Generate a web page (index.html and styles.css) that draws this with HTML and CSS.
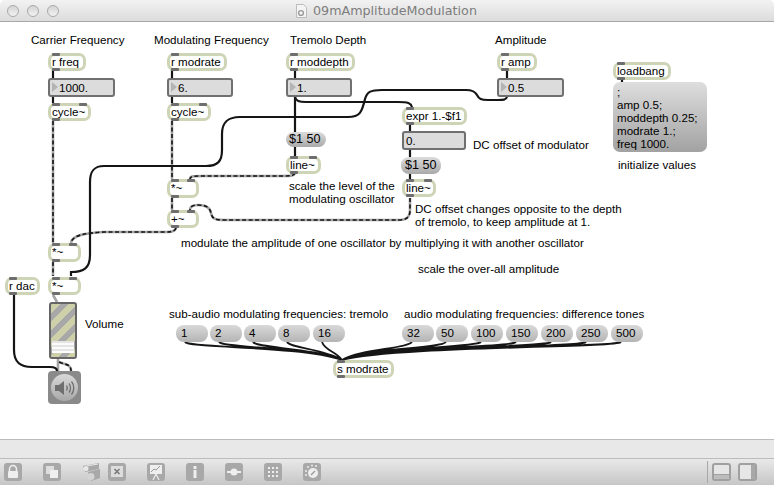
FILE: index.html
```html
<!DOCTYPE html>
<html lang="en">
<head>
    <meta charset="UTF-8">
    <title>09mAmplitudeModulation</title>
    <link rel="stylesheet" href="styles.css">
</head>
<body>
<div class="window">
    <header class="titlebar">
        <div class="lights"><span></span><span></span><span></span></div>
        <div class="title">
            <svg class="docicon" width="11" height="14" viewBox="0 0 11 14"><path d="M.5.5h7l3 3v10H.5z" fill="#f4f4f4" stroke="#bbb"/><circle cx="5" cy="9" r="2.4" fill="none" stroke="#999" stroke-width="1.4"/></svg>
            <span>09mAmplitudeModulation</span>
        </div>
    </header>

    <main class="patcher">
        <!-- patch cords -->
        <svg class="cords" width="774" height="417" viewBox="0 22 774 417">
            <g class="cord-signal-under">
                <path d="M53 121V243"/>
                <path d="M172 121V179"/>
                <path d="M295 173C294 176 290 176 282 176H203C194 176 190 176 190 179"/>
                <path d="M172 198V210"/>
                <path d="M410 198V210C410 218 406 220 398 220H224C214 220 212 218 211 213C210 207 205 205 198 205C192 205 190 207 190 210"/>
                <path d="M176 228C175 232 170 232 164 232H104C86 233 72 235 71 243"/>
                <path d="M53 262V276"/>
                <path d="M53 295L57 302"/>
                <path d="M58 359V371"/>
                <path d="M59 362C66 365 71 364 71 371"/>
            </g>
            <g class="cord-signal">
                <path d="M53 121V243"/>
                <path d="M172 121V179"/>
                <path d="M295 173C294 176 290 176 282 176H203C194 176 190 176 190 179"/>
                <path d="M172 198V210"/>
                <path d="M410 198V210C410 218 406 220 398 220H224C214 220 212 218 211 213C210 207 205 205 198 205C192 205 190 207 190 210"/>
                <path d="M176 228C175 232 170 232 164 232H104C86 233 72 235 71 243"/>
                <path d="M53 262V276"/>
                <path d="M59 362C66 365 71 364 71 371"/>
            </g>
            <g class="cord">
                <path d="M53 70V78M53 97V103M172 70V78M172 97V103M295 70V78M295 97V132M295 147V156"/>
                <path d="M507 70V78M410 125V131M410 150V157M410 174V180M622 79V82"/>
                <path d="M295 97C296 101 299 102 306 102H398C408 102 411 103 412 107"/>
                <path d="M507 97C506 100 503 100 498 100H488C481 100 479 99 477 95C475 91 472 90 466 90H382C370 90 367 92 365 99C362 112 360 117 348 117H240C228 117 222 122 222 134V150C222 161 218 166 206 166H104C94 166 90 171 90 182V255C90 268 84 272 71 272V276"/>
                <path d="M14 294V350C14 362 20 367 32 367H50C55 367 57 368 57 371"/>
            </g>
            <g class="cord thin">
                <path d="M185 342C188 348 300 346 342 360M219 342C222 348 310 347 342 360M253 342C256 348 315 348 342 360M287 342C290 348 325 349 342 360M322 342C325 351 336 351 342 360"/>
                <path d="M412 342C406 349 360 349 342 360M446 342C440 349 370 347 342 360M481 342C475 348 375 347 342 360M516 342C510 348 380 346 342 360M551 342C545 348 385 346 342 360M586 342C580 348 390 346 342 360M621 342C615 348 395 346 342 360"/>
            </g>
        </svg>

        <!-- comments -->
        <div class="label l-carrier">Carrier Frequency</div>
        <div class="label l-modfreq">Modulating Frequency</div>
        <div class="label l-depth">Tremolo Depth</div>
        <div class="label l-amp">Amplitude</div>
        <div class="label l-init">initialize values</div>
        <div class="label l-dc">DC offset of modulator</div>
        <div class="label l-scale">scale the level of the<br>modulating oscillator</div>
        <div class="label l-opposite">DC offset changes opposite to the depth<br>of tremolo, to keep amplitude at 1.</div>
        <div class="label l-modulate">modulate the amplitude of one oscillator by multiplying it with another oscillator</div>
        <div class="label l-overall">scale the over-all amplitude</div>
        <div class="label l-volume">Volume</div>
        <div class="label l-sub">sub-audio modulating frequencies: tremolo</div>
        <div class="label l-audio">audio modulating frequencies: difference tones</div>

        <!-- objects -->
        <div class="obj o-rfreq">r freq</div>
        <div class="num n-freq">1000.</div>
        <div class="obj sig o-cycle1">cycle~<i class="in2"></i></div>
        <div class="obj o-rmod">r modrate</div>
        <div class="num n-mod">6.</div>
        <div class="obj sig o-cycle2">cycle~<i class="in2"></i></div>
        <div class="obj o-rdepth">r moddepth</div>
        <div class="num n-depth">1.</div>
        <div class="obj o-ramp">r amp</div>
        <div class="num n-amp">0.5</div>
        <div class="obj o-expr">expr 1.-$f1</div>
        <div class="num plain n-dc">0.</div>
        <div class="msg m-line1">$1 50</div>
        <div class="msg m-line2">$1 50</div>
        <div class="obj sig o-line1">line~<i class="in2"></i></div>
        <div class="obj sig o-line2">line~<i class="in2"></i></div>
        <div class="obj sig o-mul1">*~<i class="in2"></i></div>
        <div class="obj sig o-add">+~<i class="in2"></i></div>
        <div class="obj sig o-mul2">*~<i class="in2"></i></div>
        <div class="obj sig o-mul3">*~<i class="in2"></i></div>
        <div class="obj o-rdac">r dac</div>
        <div class="obj o-load">loadbang</div>
        <div class="msg init-msg">;<br>amp 0.5;<br>moddepth 0.25;<br>modrate 1.;<br>freq 1000.</div>

        <div class="gain"><div class="gain-handle"></div></div>
        <div class="dac">
            <div class="dac-disc">
                <svg width="22" height="18" viewBox="0 0 22 18"><path d="M1 6h4l5-4v14l-5-4H1z" fill="#6f6f6f"/><path d="M12.500 6.500c1 1.500 1 3.500 0 5M15 4.500c2 2.500 2 6.500 0 9M17.500 2.500c3 3.500 3 9.500 0 13" fill="none" stroke="#6f6f6f" stroke-width="1.300"/></svg>
            </div>
        </div>

        <div class="msg btn b1">1</div>
        <div class="msg btn b2">2</div>
        <div class="msg btn b3">4</div>
        <div class="msg btn b4">8</div>
        <div class="msg btn b5">16</div>
        <div class="msg btn b6">32</div>
        <div class="msg btn b7">50</div>
        <div class="msg btn b8">100</div>
        <div class="msg btn b9">150</div>
        <div class="msg btn b10">200</div>
        <div class="msg btn b11">250</div>
        <div class="msg btn b12">500</div>
        <div class="obj o-send">s modrate</div>
    </main>

    <div class="statusband"></div>

    <footer class="toolbar">
        <div class="tool t-lock"><svg width="18" height="18" viewBox="0 0 18 18"><path d="M5.500 8V6a3.500 3.500 0 0 1 7 0v2" fill="none" stroke="#eee" stroke-width="1.500"/><rect x="4" y="8" width="10" height="7" rx="1" fill="#eee"/></svg></div>
        <div class="tool t-copy"><svg width="18" height="18" viewBox="0 0 18 18"><rect x="3" y="3" width="8" height="8" fill="#ddd"/><rect x="7" y="7" width="8" height="8" fill="#f0f0f0"/></svg></div>
        <div class="tool bare t-fork"><svg width="18" height="18" viewBox="0 0 18 18"><path d="M1 3l16-3v6L3 9z" fill="#a8a8a8"/><path d="M6 9l12-3v9l-9 3z" fill="#a8a8a8"/><circle cx="4" cy="5.500" r="2.500" fill="#e8e8e8"/><circle cx="9" cy="13.500" r="3.500" fill="#d4d4d4"/><path d="M5 3l11-2" stroke="#e8e8e8"/></svg></div>
        <div class="tool t-x"><svg width="18" height="18" viewBox="0 0 18 18"><rect x="3" y="3" width="12" height="11" fill="#ddd"/><path d="M6.500 6l5 5m0-5l-5 5" stroke="#777" stroke-width="1.500"/></svg></div>
        <div class="tool t-chart"><svg width="18" height="18" viewBox="0 0 18 18"><rect x="3" y="2" width="12" height="9" fill="#eee"/><path d="M4 9l3-3 2 1 4-4" fill="none" stroke="#999"/><path d="M9 11L6 17M9 11l3 6" stroke="#eee" stroke-width="1.200"/></svg></div>
        <div class="tool t-info"><svg width="18" height="18" viewBox="0 0 18 18"><rect x="7.500" y="3" width="3" height="3" fill="#eee"/><rect x="7.500" y="7" width="3" height="8" fill="#eee"/></svg></div>
        <div class="tool t-node"><svg width="18" height="18" viewBox="0 0 18 18"><path d="M2 9h14" stroke="#eee" stroke-width="2"/><circle cx="9" cy="9" r="3.500" fill="#eee"/></svg></div>
        <div class="tool t-grid"><svg width="18" height="18" viewBox="0 0 18 18" fill="#eee"><rect x="4" y="4" width="2" height="2"/><rect x="8" y="4" width="2" height="2"/><rect x="12" y="4" width="2" height="2"/><rect x="4" y="8" width="2" height="2"/><rect x="8" y="8" width="2" height="2"/><rect x="12" y="8" width="2" height="2"/><rect x="4" y="12" width="2" height="2"/><rect x="8" y="12" width="2" height="2"/><rect x="12" y="12" width="2" height="2"/></svg></div>
        <div class="tool t-dial"><svg width="18" height="18" viewBox="0 0 18 18"><circle cx="10" cy="10" r="5" fill="#eee"/><path d="M8 12l4-4" stroke="#999" stroke-width="1.300"/><g fill="#eee"><circle cx="3" cy="8" r="1"/><circle cx="5" cy="4" r="1"/><circle cx="9" cy="2.500" r="1"/><circle cx="13" cy="3" r="1"/><circle cx="3" cy="12" r="1"/></g></svg></div>
        <div class="toolbar-right">
            <div class="view"><span class="view-bottom"></span></div>
            <div class="view"><span class="view-side"></span></div>
        </div>
    </footer>
</div>
</body>
</html>
```

FILE: styles.css
```css
* {
    box-sizing: border-box;
}

html, body {
    margin: 0;
    padding: 0;
    background-color: #FFFFFF;
}

body {
    font-family: "Liberation Sans", Arial, sans-serif;
    font-size: 11.6px;
    color: #000;
}

.window {
    width: 774px;
    height: 485px;
    display: flex;
    flex-direction: column;
    overflow: hidden;
}

/* Title bar */
.titlebar {
    height: 22px;
    flex: none;
    display: flex;
    align-items: center;
    position: relative;
    background: linear-gradient(#f2f2f2, #dcdcdc);
    border-bottom: 1px solid #a8a8a8;
    border-radius: 5px 5px 0 0;
}

.lights {
    display: flex;
    gap: 8px;
    margin-left: 7px;
}

.lights span {
    width: 12px;
    height: 12px;
    border-radius: 50%;
    border: 1px solid #a9a9a9;
    background: linear-gradient(#d4d4d4, #f2f2f2);
}

.title {
    display: flex;
    align-items: center;
    gap: 6px;
    margin-left: 237px;
    font-family: "DejaVu Sans", sans-serif;
    font-size: 12.7px;
    color: #7d7d7d;
}

/* Patcher canvas */
.patcher {
    flex: 1;
    position: relative;
}

.cords {
    position: absolute;
    left: 0;
    top: 0;
}

.cords path {
    fill: none;
}

.cord path {
    stroke: #151515;
    stroke-width: 2.2;
}

.cord.thin path {
    stroke-width: 1.8;
}

.cord-signal-under path {
    stroke: #a5a5a5;
    stroke-width: 2.6;
}

.cord-signal path {
    stroke: #151515;
    stroke-width: 1.6;
    stroke-dasharray: 4 2.5;
}

.label {
    position: absolute;
    white-space: nowrap;
    line-height: 13px;
}

.l-carrier { left: 31px; top: 11px; }
.l-modfreq { left: 154px; top: 11px; }
.l-depth { left: 290px; top: 11px; }
.l-amp { left: 495px; top: 11px; }
.l-init { left: 618px; top: 136px; }
.l-dc { left: 473px; top: 116px; }
.l-scale { left: 289px; top: 157px; }
.l-opposite { left: 415px; top: 180px; }
.l-modulate { left: 181px; top: 214px; }
.l-overall { left: 418px; top: 240px; }
.l-volume { left: 85px; top: 295px; }
.l-sub { left: 169px; top: 285px; }
.l-audio { left: 404px; top: 285px; }

/* Patcher objects */
.obj, .num, .msg {
    position: absolute;
    white-space: nowrap;
}

.obj {
    height: 18px;
    padding-left: 1px;
    line-height: 12px;
    background-color: #fff;
    border: 3px solid #ced5b6;
    border-radius: 7px;
}

.obj::before, .obj::after, .num::after, .in2 {
    content: "";
    position: absolute;
    width: 8px;
    height: 3px;
    background-color: #6e6e6e;
    border-radius: 1px;
}

.obj::before {
    left: 1px;
    top: -3px;
}

.obj::after {
    left: 1px;
    bottom: -3px;
}

.in2 {
    right: 1px;
    top: -3px;
}

.num {
    height: 19px;
    padding-left: 9px;
    line-height: 15px;
    background-color: #dcdcdc;
    border: 2px solid #707070;
    border-radius: 3px;
}

.num::after {
    left: 2px;
    bottom: -2px;
    height: 2px;
}

/* the little triangle in a number box */
.num::before {
    content: "";
    position: absolute;
    left: 2px;
    top: 2px;
    border-left: 6px solid #b4b4b4;
    border-top: 5px solid transparent;
    border-bottom: 5px solid transparent;
}

.num.plain {
    padding-left: 2px;
}

.num.plain::before {
    display: none;
}

.msg {
    padding-left: 4px;
    line-height: 15px;
    border-radius: 8px;
    background: linear-gradient(#dcdcdc, #a9a9a9);
}

.btn {
    top: 303px;
    width: 32px;
    height: 17px;
    padding-left: 5px;
    background: linear-gradient(#d9d9d9, #b4b4b4);
}

.o-rfreq { left: 48px; top: 31px; width: 38px; }
.n-freq { left: 48px; top: 56px; width: 67px; }
.o-cycle1 { left: 48px; top: 81px; width: 43px; }
.o-rmod { left: 167px; top: 31px; width: 60px; }
.n-mod { left: 167px; top: 56px; width: 66px; }
.o-cycle2 { left: 167px; top: 81px; width: 44px; }
.o-rdepth { left: 286px; top: 31px; width: 69px; }
.n-depth { left: 286px; top: 56px; width: 66px; }
.o-ramp { left: 497px; top: 31px; width: 40px; }
.n-amp { left: 497px; top: 56px; width: 67px; }
.o-expr { left: 402px; top: 85px; width: 65px; }
.n-dc { left: 402px; top: 109px; width: 64px; }
.m-line1 { left: 286px; top: 110px; width: 40px; height: 15px; font-size: 12.6px; padding-left: 3px; }
.m-line2 { left: 401px; top: 135px; width: 40px; height: 17px; line-height: 17px; font-size: 12.6px; }
.o-line1 { left: 286px; top: 134px; width: 35px; }
.o-line2 { left: 402px; top: 157px; width: 34px; }
.o-mul1 { left: 167px; top: 157px; width: 32px; height: 19px; }
.o-add { left: 167px; top: 188px; width: 32px; }
.o-mul2 { left: 48px; top: 221px; width: 33px; height: 19px; }
.o-mul3 { left: 48px; top: 255px; width: 33px; }
.o-rdac { left: 5px; top: 255px; width: 35px; }
.o-load { left: 613px; top: 40px; width: 58px; }
.o-send { left: 333px; top: 338px; width: 61px; }

.init-msg {
    left: 613px;
    top: 60px;
    width: 94px;
    height: 70px;
    line-height: 13px;
    padding-top: 3px;
    background: linear-gradient(#dedede, #a2a2a2);
    border-radius: 7px;
}

.b1 { left: 176px; }
.b2 { left: 210px; }
.b3 { left: 244px; }
.b4 { left: 278px; }
.b5 { left: 313px; }
.b6 { left: 402px; }
.b7 { left: 436px; }
.b8 { left: 471px; }
.b9 { left: 506px; }
.b10 { left: 541px; }
.b11 { left: 576px; }
.b12 { left: 611px; }

.gain {
    position: absolute;
    left: 49px;
    top: 280px;
    width: 28px;
    height: 57px;
    border: 2px solid #666;
    border-radius: 3px;
    background: repeating-linear-gradient(-45deg, #cdd0a8 0 6px, #a8a8a8 6px 12px);
}

.gain-handle {
    position: absolute;
    left: 1px;
    right: 1px;
    bottom: 4px;
    height: 12px;
    background: repeating-linear-gradient(#e4e4e4 0 2px, #fbfbfb 2px 4px);
}

.dac {
    position: absolute;
    left: 48px;
    top: 349px;
    width: 33px;
    height: 33px;
    display: flex;
    align-items: center;
    justify-content: center;
    background-color: #8a8a8a;
    border-radius: 4px;
}

.dac-disc {
    width: 27px;
    height: 27px;
    display: flex;
    align-items: center;
    justify-content: center;
    border-radius: 50%;
    background: linear-gradient(#d8d8d8, #a8a8a8);
}

/* Bottom bars */
.statusband {
    height: 20px;
    flex: none;
    background-color: #e8e8e8;
    border-top: 1px solid #bcbcbc;
    border-bottom: 1px solid #bcbcbc;
}

.toolbar {
    height: 26px;
    flex: none;
    display: flex;
    align-items: center;
    padding: 0 0 0 4px;
    background: linear-gradient(#e9e9e9, #c6c6c6);
}

.tool {
    width: 18px;
    height: 18px;
    flex: none;
    margin-right: 21px;
    border-radius: 3px;
    background-color: #a8a8a8;
}

.tool svg {
    display: block;
}

.tool.bare {
    background: none;
    margin-right: 8px;
}

.toolbar-right {
    margin-left: auto;
    display: flex;
    gap: 7px;
    height: 22px;
    align-items: center;
    padding: 0 17px 0 4px;
    border-left: 1px solid #a8a8a8;
}

.view {
    width: 19px;
    height: 18px;
    position: relative;
    overflow: hidden;
    border: 2px solid #a0a0a0;
    border-radius: 3px;
    background-color: #e6e6e6;
}

.view-bottom {
    position: absolute;
    left: 0;
    right: 0;
    bottom: 0;
    height: 5px;
    background-color: #bdbdbd;
    border-top: 1px solid #a0a0a0;
}

.view-side {
    position: absolute;
    top: 0;
    bottom: 0;
    right: 0;
    width: 4px;
    background-color: #a8a8a8;
}
```
